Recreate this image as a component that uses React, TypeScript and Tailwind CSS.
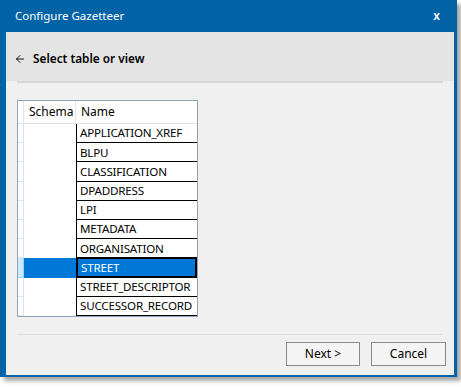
import { ArrowLeft } from 'lucide-react';

const tables = [
  'APPLICATION_XREF',
  'BLPU',
  'CLASSIFICATION',
  'DPADDRESS',
  'LPI',
  'METADATA',
  'ORGANISATION',
  'STREET',
  'STREET_DESCRIPTOR',
  'SUCCESSOR_RECORD',
];

const selected = 'STREET';

const App = () => {
  return (
    <div className="w-[461px] h-[387px] bg-white overflow-hidden text-[12px] text-black" style={{ fontFamily: '"Noto Sans", "Open Sans", sans-serif' }}>
      <div className="w-[457px] h-[377px] flex flex-col border-l-[6px] border-r-[3px] border-b-[2px] border-[#0264a6] shadow-[4px_4px_4px_rgba(0,0,0,0.35)]">
        {/* title bar */}
        <div className="h-[32px] -ml-[6px] pl-[15px] pr-[14px] bg-[#0264a6] text-white flex items-center justify-between">
          <span className="text-[11.5px]">Configure Gazetteer</span>
          <span className="text-[12px] font-semibold">x</span>
        </div>

        <div className="flex-1 bg-[#f0f0f0] flex flex-col">
          {/* header band */}
          <div className="h-[49px] bg-[#e4e4e4] flex items-center gap-[7px] pl-[8px] pt-[4px]">
            <ArrowLeft className="w-[12px] h-[12px]" strokeWidth={1.8} />
            <span className="text-[11.8px] font-semibold">Select table or view</span>
          </div>
          <div className="mx-[11px] h-[2px] bg-[#d8d8d8]" />

          {/* grid */}
          <div className="ml-[11px] mt-[17px] w-[181px] border border-[#8ea4bd] bg-[#f0f0f0]">
            <div className="flex h-[23px] bg-white border-b border-[#e5e5e5]">
              <div className="w-[6px] border-r border-[#e5e5e5]" />
              <div className="w-[52px] pl-[5px] flex items-center border-r border-[#e5e5e5]">Schema</div>
              <div className="flex-1 pl-[5px] flex items-center">Name</div>
            </div>
            {tables.map((t) => {
              const sel = t === selected;
              return (
                <div key={t} className="flex h-[19.2px]">
                  <div className={`w-[6px] border-b border-r ${sel ? 'bg-[#cce8ff] border-[#99d1ff]' : 'bg-white border-[#e0e0e0]'}`} />
                  <div className={`w-[52px] ${sel ? 'bg-[#0078d7]' : 'bg-white'}`} />
                  <div
                    className={`flex-1 pl-[3px] flex items-center whitespace-nowrap text-[11.6px] tracking-[-0.2px] ${
                      sel ? 'bg-[#0078d7] text-white border-2 border-black -mt-[1px]' : 'bg-white border-l border-b border-black'
                    }`}
                  >
                    {t}
                  </div>
                </div>
              );
            })}
          </div>

          <div className="flex-1" />
          <div className="mx-[11px] h-[1px] bg-[#dcdcdc]" />
          <div className="flex justify-end gap-[11px] pr-[8px] pt-[7px] pb-[9px]">
            <button className="w-[74px] h-[24px] bg-[#f4f4f4] border border-[#8a8a8a] text-[12px]">Next &gt;</button>
            <button className="w-[75px] h-[24px] bg-[#f4f4f4] border border-[#8a8a8a] text-[12px]">Cancel</button>
          </div>
        </div>
      </div>
    </div>
  );
};

export default App;
